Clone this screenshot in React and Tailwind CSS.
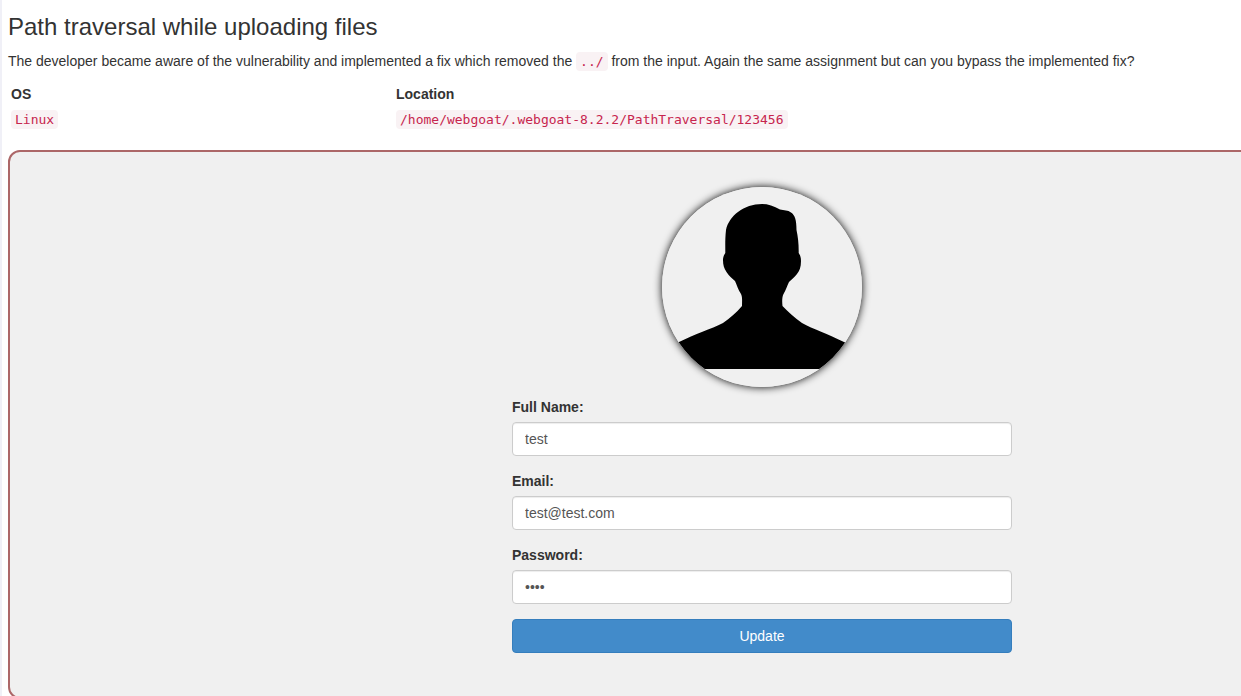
const FIELDS = [
  { id: 'fullName', label: 'Full Name:', type: 'text', value: 'test' },
  { id: 'email', label: 'Email:', type: 'text', value: 'test@test.com' },
  { id: 'password', label: 'Password:', type: 'password', value: 'test' },
];

function Code({ children }) {
  return (
    <code className="rounded bg-[#f9f2f4] px-1 py-0.5 font-['DejaVu_Sans_Mono',monospace] text-[13px] text-[#c7254e]">
      {children}
    </code>
  );
}

function Avatar() {
  return (
    <div className="size-[200px] overflow-hidden rounded-full shadow-[0_0_8px_#000]">
      <svg viewBox="0 0 200 200" className="block size-full bg-[#f0f0f0]" role="img" aria-label="Profile picture">
        <path d="M100 17C106 17 112 19 118 22.5C122 23.5 126 23 129 25.5C133 28 134.5 33 134.5 43C136 50 136.800 57 136.700 66C138 68 139 70 139 74C139 80 137.500 84 135 87C132 91 129.500 92.500 127 95C125 99 124 103 121.500 107C120 110 120 115 120.500 119C126 125 132 130 140 136C151 142 166 147 182 155L200 164V182H0V164L17 155C33 147 49 142 61 136C68 131 74 126 80 119C80 114 80.500 110 79 107C76 103 75 98 73 94C70 91 67 89 64.500 85C62 81 61 78 61 73C61 70 62 68 63.300 66C63.300 59 63 52 64 43C67 29 82 17 100 17Z" />
      </svg>
    </div>
  );
}

export default function App() {
  return (
    <main className="h-screen overflow-hidden border-l-2 border-[#f0f0f7] bg-white pl-1.5 pt-3 font-['Liberation_Sans',Arial,sans-serif] text-sm text-[#333]">
      <h1 className="text-2xl leading-[30px]">Path traversal while uploading files</h1>
      <p className="mt-[9px] leading-5">
        The developer became aware of the vulnerability and implemented a fix which removed the{' '}
        <Code>../</Code> from the input. Again the same assignment but can you bypass the implemented fix?
      </p>

      <table className="mt-2.5 w-[770px] table-fixed text-left leading-5">
        <thead>
          <tr>
            <th className="px-[3px] py-0.5">OS</th>
            <th className="px-[3px] py-0.5">Location</th>
          </tr>
        </thead>
        <tbody>
          <tr>
            <td className="px-[3px] pb-1 pt-[3px]"><Code>Linux</Code></td>
            <td className="whitespace-nowrap px-[3px] pb-1 pt-[3px]"><Code>/home/webgoat/.webgoat-8.2.2/PathTraversal/123456</Code></td>
          </tr>
        </tbody>
      </table>

      <section className="-mr-[275px] mt-4 flex flex-col items-center rounded-xl border-2 border-[#ac6768] bg-[#f0f0f0] pb-11 pt-[35px]">
        <Avatar />
        <form className="mt-2.5 flex w-full max-w-[500px] flex-col gap-[15px]" onSubmit={(e) => e.preventDefault()}>
          {FIELDS.map((f) => (
            <div key={f.id}>
              <label htmlFor={f.id} className="mb-[5px] block font-bold leading-5">{f.label}</label>
              <input
                id={f.id}
                type={f.type}
                defaultValue={f.value}
                className="block h-[34px] w-full rounded border border-[#ccc] bg-white px-3 py-1.5 text-[#555] shadow-[inset_0_1px_1px_rgba(0,0,0,0.075)]"
              />
            </div>
          ))}
          <button type="submit" className="h-[34px] rounded border border-[#357ebd] bg-[#428bca] text-white">
            Update
          </button>
        </form>
      </section>
    </main>
  );
}
